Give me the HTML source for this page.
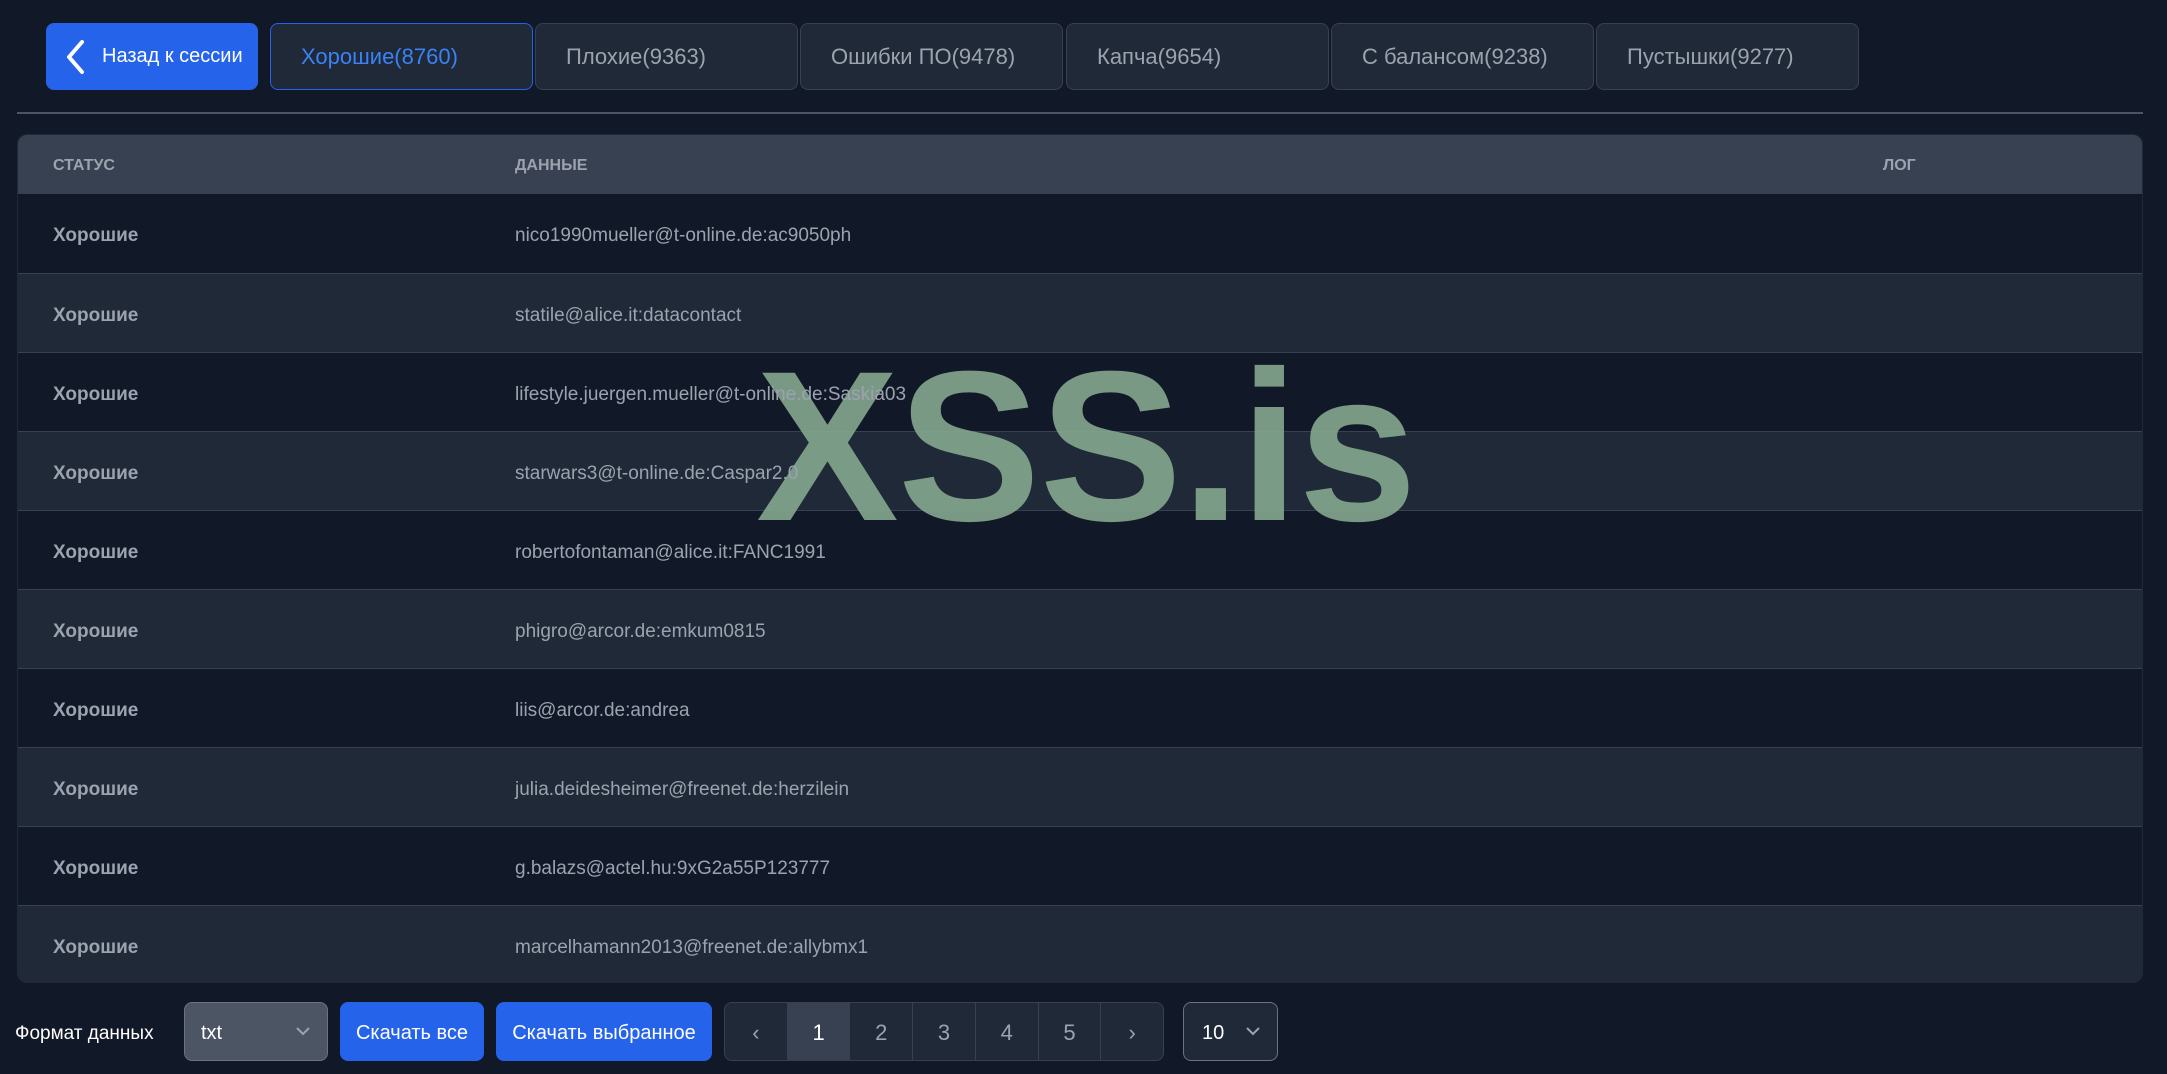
<!DOCTYPE html>
<html><head><meta charset="utf-8"><style>
*{box-sizing:border-box;margin:0;padding:0}
body{width:2167px;height:1074px;background:#111827;font-family:"Liberation Sans",sans-serif;position:relative;overflow:hidden;color:#d1d5db}
.back{position:absolute;left:46px;top:23px;width:212px;height:67px;background:#2563eb;border-radius:8px;color:#fff;font-size:20px;display:flex;align-items:center;padding-left:56px}
.back svg{position:absolute;left:16px;top:16px}
.tab{position:absolute;top:23px;width:263px;height:67px;background:#1f2937;border:1px solid #374151;border-radius:8px;color:#9ca3af;font-size:22px;padding-left:30px;line-height:65px}
.tab.act{border-color:#2563eb;color:#3b82f6}
.hr{position:absolute;left:17px;top:112px;width:2126px;height:2px;background:#4b5563}
.table{position:absolute;left:17px;top:134px;width:2126px;height:849px;border-radius:10px;overflow:hidden;background:#111827;border:1px solid #1f2937}
.head{height:59px;background:#374151;position:relative;font-size:16px;font-weight:bold;color:#9ca3af}
.row{height:79px;position:relative;border-top:1px solid #374151;font-size:19px}
.c1{position:absolute;left:35px;top:0}
.c2{position:absolute;left:497px}
.c3{position:absolute;left:1865px}
.head span{line-height:61px}
.row span{line-height:84px;z-index:3}
.row .c1{font-weight:bold;color:#9ca3af}
.row .c2{color:#9ca3af}
.wm{position:absolute;left:756px;top:340px;font-size:214px;font-weight:bold;color:rgba(130,165,140,0.92);line-height:1;letter-spacing:-1px;z-index:2}
.txt{position:absolute;left:0;top:0;z-index:3}
.bot{position:absolute;top:1002px;height:59px}
.lbl{left:15px;top:1004px;line-height:59px;color:#fff;font-size:19px;position:absolute}
.sel{left:184px;width:144px;background:#4b5563;border:1px solid #6b7280;border-radius:8px;color:#fff;font-size:20px;line-height:60px;padding-left:16px}
.btn{background:#2563eb;border-radius:8px;color:#fff;font-size:20px;line-height:62px;text-align:center}
.pag{left:724px;width:440px;background:#1f2937;border:1px solid #374151;border-radius:8px;display:flex;overflow:hidden}
.pag div{flex:1;text-align:center;line-height:60px;color:#9ca3af;font-size:22px;border-left:1px solid #374151}
.pag div:first-child{border-left:none}
.pag .on{background:#374151;color:#fff}
.ps{left:1183px;width:95px;border:1px solid #6b7280;border-radius:8px;background:#1f2937;color:#fff;font-size:20px;line-height:60px;padding-left:18px}
.chev{position:absolute;right:16px;top:22px}
</style></head><body>
<div class="back"><svg width="26" height="36" viewBox="0 0 26 36"><path d="M20 3 L7 18 L20 33" stroke="#fff" stroke-width="4" fill="none" stroke-linecap="round" stroke-linejoin="round"/></svg>Назад к сессии</div>
<div class="tab act" style="left:270px">Хорошие(8760)</div>
<div class="tab" style="left:535px">Плохие(9363)</div>
<div class="tab" style="left:800px">Ошибки ПО(9478)</div>
<div class="tab" style="left:1066px">Капча(9654)</div>
<div class="tab" style="left:1331px">С балансом(9238)</div>
<div class="tab" style="left:1596px">Пустышки(9277)</div>
<div class="hr"></div>
<div class="table">
<div class="head"><span class="c1">СТАТУС</span><span class="c2">ДАННЫЕ</span><span class="c3">ЛОГ</span></div>
<div>
<div class="row" style="background:#111827;border-top:none"><span class="c1">Хорошие</span><span class="c2">nico1990mueller@t-online.de:ac9050ph</span></div>
<div class="row" style="background:#1f2937"><span class="c1">Хорошие</span><span class="c2">statile@alice.it:datacontact</span></div>
<div class="row" style="background:#111827"><span class="c1">Хорошие</span><span class="c2">lifestyle.juergen.mueller@t-online.de:Saskia03</span></div>
<div class="row" style="background:#1f2937"><span class="c1">Хорошие</span><span class="c2">starwars3@t-online.de:Caspar2.0</span></div>
<div class="row" style="background:#111827"><span class="c1">Хорошие</span><span class="c2">robertofontaman@alice.it:FANC1991</span></div>
<div class="row" style="background:#1f2937"><span class="c1">Хорошие</span><span class="c2">phigro@arcor.de:emkum0815</span></div>
<div class="row" style="background:#111827"><span class="c1">Хорошие</span><span class="c2">liis@arcor.de:andrea</span></div>
<div class="row" style="background:#1f2937"><span class="c1">Хорошие</span><span class="c2">julia.deidesheimer@freenet.de:herzilein</span></div>
<div class="row" style="background:#111827"><span class="c1">Хорошие</span><span class="c2">g.balazs@actel.hu:9xG2a55P123777</span></div>
<div class="row" style="background:#1f2937"><span class="c1">Хорошие</span><span class="c2">marcelhamann2013@freenet.de:allybmx1</span></div>
</div></div>
<div class="wm">XSS.is</div>
<div class="lbl">Формат данных</div>
<div class="bot sel">txt<svg class="chev" width="16" height="12" viewBox="0 0 16 12"><path d="M2 3 L8 9 L14 3" stroke="#9ca3af" stroke-width="2" fill="none"/></svg></div>
<div class="bot btn" style="left:340px;width:144px">Скачать все</div>
<div class="bot btn" style="left:496px;width:216px">Скачать выбранное</div>
<div class="bot pag"><div>‹</div><div class="on">1</div><div>2</div><div>3</div><div>4</div><div>5</div><div>›</div></div>
<div class="bot ps">10<svg class="chev" width="16" height="12" viewBox="0 0 16 12"><path d="M2 3 L8 9 L14 3" stroke="#9ca3af" stroke-width="2" fill="none"/></svg></div>
</body></html>
